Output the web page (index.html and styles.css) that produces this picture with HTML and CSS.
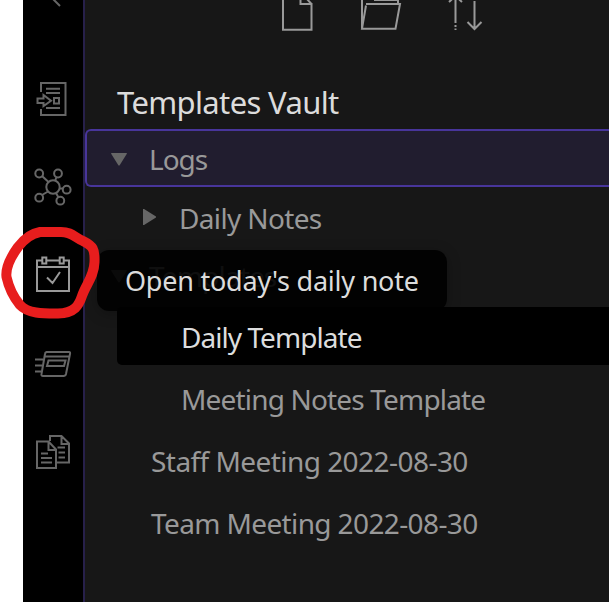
FILE: index.html
```
<!DOCTYPE html>
<html lang="en">
<head>
<meta charset="utf-8">
<title>Templates Vault</title>
<link rel="stylesheet" href="styles.css">
</head>
<body>
<div class="app">
  <nav class="ribbon">
    <svg class="collapse" width="60" height="8" viewBox="23 0 60 8"><path d="M52 -2L60 6"/></svg>
    <svg class="tool switcher" width="60" height="40" viewBox="23 80 60 40"><path d="M41 92V83H65.500V115H41V109M46 88.700H60M46 93H60M46 108H60M54 98H59V103.500H54ZM37.500 98.500H43.500V95L51 100.700L43.500 106V103H37.500Z"/></svg>
    <svg class="tool graph" width="60" height="40" viewBox="23 167 60 40"><circle cx="53" cy="187" r="6.700"/><circle cx="39.200" cy="173.500" r="3.900"/><circle cx="58" cy="173.500" r="3.900"/><circle cx="66.700" cy="189.700" r="3.900"/><circle cx="60.300" cy="200.700" r="3.900"/><circle cx="39.200" cy="197.700" r="3.900"/><path d="M42 176L48.500 182M56.500 177L55 181M59.500 188.500H63M56 193L58.500 197.500M42 195L48 191.500"/></svg>
    <svg class="tool daily" width="60" height="40" viewBox="23 255 60 40"><path d="M42 260.500H37V291H69V260.500H64M46.500 260.500H59.500M37 267H69M42.300 257.500H46.300V263.500H42.300ZM59.700 257.500H63.700V263.500H59.700ZM47 277.500L52.500 283L60 272"/></svg>
    <svg class="tool cards" width="60" height="40" viewBox="23 343 60 40"><path d="M46 352H69Q70.500 352 70 354L66 374Q65.500 376 63.500 376H43Q41 376 41.500 374L45 354Q45.300 352 47 352M45 356.500H69.500M48.500 360.500H65.500L64 366H47ZM35 359.500H43M35 365.500H42M35 371.500H41"/></svg>
    <svg class="tool copy" width="60" height="42" viewBox="23 430 60 42"><path d="M50 441V436H61.500L69 443.500V462.500H57M61.500 436V444H69M57.500 447.500H65M58.500 452.500H65M58.500 457.500H65M37 441.500H48.500L56 449.500V468H37ZM48.500 441.500V450H56M41 453.500H48M41 458H52M41 462.500H52"/></svg>
  </nav>
  <main class="explorer">
    <header class="actions">
      <svg width="230" height="34" viewBox="270 0 230 34"><path d="M283 -5V29.700H311.500V4H300.500V-5M306 -2L311.500 4M362 28V-3M398 -3V4M374 0H398M366 4H400L395.500 28.700H362L366 5.500"/><path d="M449 2L455.500 -4L462 2M455.500 -2V23M455.500 25V27M455.500 28.500V30M474.500 1V29M467.500 22L474.500 29L481.500 22"/></svg>
    </header>
    <h1 class="vault">Templates Vault</h1>
    <div class="tree">
      <div class="row folder selected"><i class="arrow down"></i><span class="logs">Logs</span></div>
      <div class="row folder nested"><i class="arrow right"></i><span class="daily-notes">Daily Notes</span></div>
      <div class="row folder dimmed"><i class="arrow down"></i><span class="templates">Templates</span></div>
      <div class="row file active"><span class="daily-template">Daily Template</span></div>
      <div class="row file inner"><span class="meeting-template">Meeting Notes Template</span></div>
      <div class="row file"><span class="staff">Staff Meeting 2022-08-30</span></div>
      <div class="row file"><span class="team">Team Meeting 2022-08-30</span></div>
    </div>
  </main>
  <div class="tooltip"><span>Open today's daily note</span></div>
  <svg class="marker" width="110" height="110" viewBox="0 220 110 110"><path d="M40 232Q28 234 18 247Q5 265 6.500 277Q10 293 20 305C28 314 45 313.500 58 313.500C75 313 79 305 82 296C86 284 94 277 94.500 262C95 249 93 246 83 241C74 237 72 232 61 232Z"/></svg>
</div>
</body>
</html>
```

FILE: styles.css
```
* { box-sizing: border-box; }
body { margin: 0; background: #fff; font-family: "Noto Sans", sans-serif; }
svg { display: block; fill: none; stroke: #666; stroke-width: 2; }
.app { position: relative; display: flex; width: 609px; height: 602px; padding-left: 23px; overflow: hidden; }
.ribbon { width: 60px; flex: none; background: #000; }
.switcher { margin-top: 72px; }
.graph { margin-top: 47px; }
.daily { margin-top: 48px; stroke: #999; }
.cards { margin-top: 48px; }
.copy { margin-top: 47px; }
.explorer { flex: 1; min-width: 0; background: #171717; border-left: 2px solid #27204a; }
.actions { height: 34px; padding-left: 185px; }
.actions svg { stroke: #999; }
.vault { margin: 42px 0 0 32px; height: 53px; font-size: 31px; font-weight: 400; line-height: 53px; letter-spacing: -.65px; color: #dcdcdc; white-space: nowrap; }
.row { display: flex; align-items: center; height: 58px; font-size: 28px; line-height: 58px; color: #999; white-space: nowrap; }
.row span { padding-top: 2px; }
.folder { padding-left: 26px; }
.folder span { margin-left: 22px; }
.selected { padding-left: 24px; border: 2px solid #48359b; border-right: 0; border-radius: 6px 0 0 6px; background: #211d2f; }
.nested { padding-left: 58px; margin-top: 1px; }
.nested .daily-notes { margin-left: 23px; letter-spacing: -.65px; padding-top: 1px; }
.logs { letter-spacing: -1px; }
.templates { letter-spacing: -.85px; }
.daily-template { letter-spacing: -.95px; }
.meeting-template { letter-spacing: -.83px; }
.staff { letter-spacing: -.55px; }
.team { letter-spacing: -.62px; }
.arrow { width: 16px; height: 13px; background: #666; flex: none; }
.down { margin-top: 2px; clip-path: polygon(0 8%, 6% 0, 94% 0, 100% 8%, 53% 100%, 47% 100%); }
.right { width: 13px; height: 16px; clip-path: polygon(0 0, 8% 0, 100% 47%, 100% 53%, 8% 100%, 0 100%); }
.file { padding-left: 66px; margin-top: 4px; }
.active { margin: 3px 0 4px 32px; padding-left: 64px; color: #dcddde; background: #000; border-radius: 5px 0 0 5px; position: relative; z-index: 2; }
.inner { padding-left: 96px; }
.tooltip { position: absolute; left: 97px; top: 250px; width: 350px; height: 61px; padding-left: 28px; border-radius: 12px; background: rgba(0, 0, 0, .9); box-shadow: 0 3px 14px rgba(0, 0, 0, .25); color: #dcdcdc; font-size: 27px; line-height: 62px; letter-spacing: -.23px; white-space: nowrap; }
.marker { position: absolute; left: 0; top: 220px; z-index: 3; stroke: #e71d1d; stroke-width: 10; }
```
